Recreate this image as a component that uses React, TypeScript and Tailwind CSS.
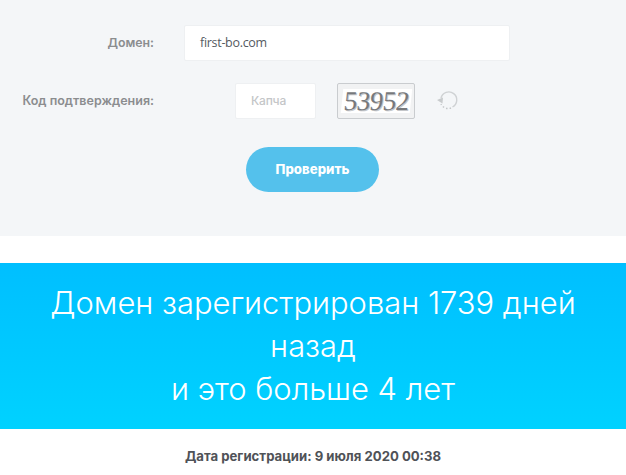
export default function App() {
  return (
    <div className="w-[626px] h-[475px] overflow-hidden bg-white font-['Inter',sans-serif]">
      {/* Форма проверки */}
      <div className="h-[236px] bg-[#f4f6f8] pt-[25px]">
        <div className="flex items-center h-[36px]">
          <label className="w-[154px] text-right text-[12.3px] font-semibold text-[#8b8d8f]">Домен:</label>
          <div className="ml-[30px] w-[326px] h-[36px] bg-white border border-[#eef0f2] rounded-[2px] flex items-center pl-[15px] text-[12.5px] tracking-[-0.3px] text-[#555a5f] font-['Open_Sans',sans-serif]">
            first-bo.com
          </div>
        </div>
        <div className="flex items-center h-[36px] mt-[22px]">
          <label className="w-[154px] text-right text-[12.5px] font-semibold text-[#8b8d8f]">Код подтверждения:</label>
          <div className="ml-[81px] w-[81px] h-[36px] bg-white border border-[#eef0f2] rounded-[2px] flex items-center pl-[15px] text-[12px] tracking-[-0.2px] font-medium text-[#c4c6c8]">
            Капча
          </div>
          <div className="ml-[21px] w-[78px] h-[36px] bg-[#f1f2f3] border border-[#c9cccf] rounded-[2px] flex items-center justify-center">
            <span className="flex items-center bg-white h-[24px] px-[2px] font-['Liberation_Serif',serif] text-[27px] leading-[24px] text-[#77797c] [text-shadow:1px_1px_0_#c4c6c9] -skew-x-6 tracking-[-0.5px]">
              53952
            </span>
          </div>
          <svg className="ml-[21px] w-[22px] h-[22px]" viewBox="0 0 22 22" fill="none">
            <path d="M5 8 A8 8 0 1 1 16.5 17" stroke="#cfd2d4" strokeWidth="1.4" />
            <path d="M15 18 A8 8 0 0 1 5 14" stroke="#c3c6c8" strokeWidth="1.4" strokeDasharray="1.5 2" />
            <path d="M1 10 L7 7.5 L6.5 13.5 Z" fill="#c8cbcd" />
          </svg>
        </div>
        <div className="mt-[28px] ml-[246px]">
          <button className="w-[133px] h-[45px] rounded-full bg-[#54c1ec] text-white text-[13.2px] font-extrabold">
            Проверить
          </button>
        </div>
      </div>

      {/* Результат */}
      <div className="mt-[27px] h-[166px] bg-gradient-to-b from-[#00bfff] to-[#00d2ff] text-center text-white text-[30.9px] leading-[43px] font-light pt-[18px] px-[40px]">
        Домен зарегистрирован 1739 дней назад
        <br />
        и это больше 4 лет
      </div>

      <p className="mt-[18px] text-center text-[13.15px] leading-[18px] font-bold text-[#4f5257]">
        Дата регистрации: 9 июля 2020 00:38
      </p>
    </div>
  );
}
